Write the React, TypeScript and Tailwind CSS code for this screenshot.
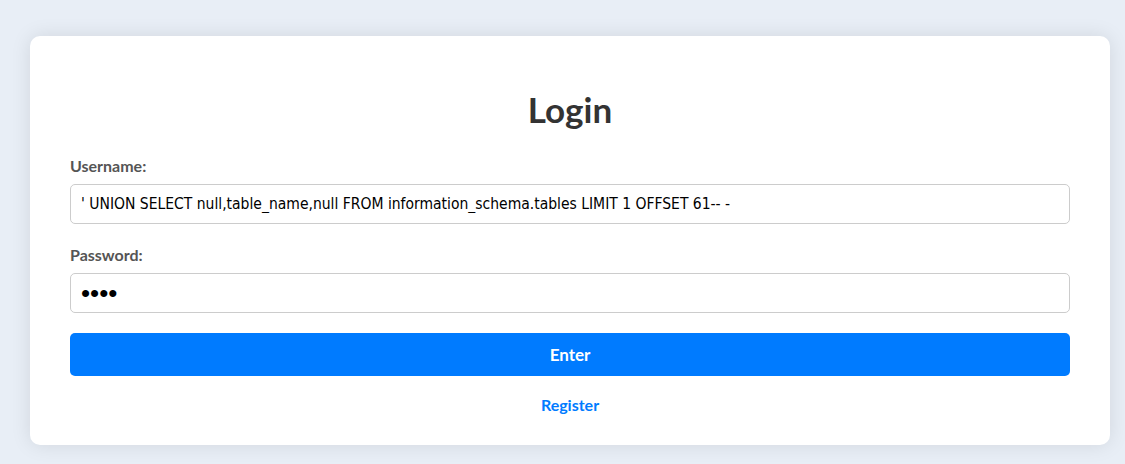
import { useState } from "react";

const App = () => {
  const [username, setUsername] = useState(
    "' UNION SELECT null,table_name,null FROM information_schema.tables LIMIT 1 OFFSET 61-- -"
  );
  const [password, setPassword] = useState("aaaa");

  return (
    <div
      className="h-screen overflow-hidden bg-[#e8eef6] pl-[30px] pr-[15px] pt-[36px]"
      style={{ fontFamily: "Lato, 'Noto Sans', sans-serif" }}
    >
      <div className="bg-white rounded-[10px] shadow-[0_0_20px_rgba(0,0,0,0.1)] px-[40px] pt-[53px] pb-[28px]">
        <h2 className="text-center text-[35px] leading-[40px] font-bold text-[#333] mb-[27px]">
          Login
        </h2>
        <form onSubmit={(e) => e.preventDefault()} className="flex flex-col">
          <label
            htmlFor="username"
            className="text-[16px] leading-[19px] font-bold text-[#555] mb-[9px]"
          >
            Username:
          </label>
          <input
            id="username"
            type="text"
            value={username}
            onChange={(e) => setUsername(e.target.value)}
            className="h-[40px] border border-[#ccc] rounded-[5px] px-[10px] text-[15.5px] text-black focus:outline-none"
            style={{ fontFamily: "Tahoma, 'DejaVu Sans Condensed', 'Liberation Sans', sans-serif" }}
          />
          <label
            htmlFor="password"
            className="text-[16px] leading-[19px] font-bold text-[#555] mt-[21px] mb-[9px]"
          >
            Password:
          </label>
          <input
            id="password"
            type="password"
            value={password}
            onChange={(e) => setPassword(e.target.value)}
            className="h-[40px] border border-[#ccc] rounded-[5px] px-[10px] text-[26px] text-black focus:outline-none"
            style={{ fontFamily: "'Liberation Sans', sans-serif" }}
          />
          <button
            type="submit"
            className="mt-[20px] h-[43px] bg-[#007bff] rounded-[5px] text-white text-[17px] font-bold"
          >
            Enter
          </button>
        </form>
        <div className="text-center mt-[17px]">
          <a href="#" className="text-[#007bff] text-[16px] leading-[19px] font-bold">
            Register
          </a>
        </div>
      </div>
    </div>
  );
};

export default App;
